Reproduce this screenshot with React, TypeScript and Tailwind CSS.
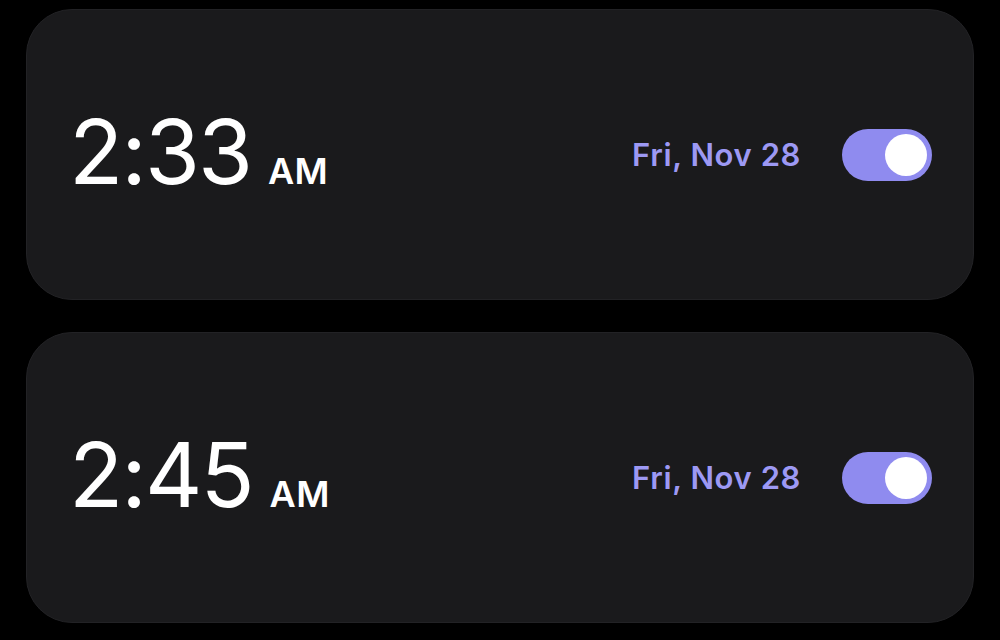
import React from "react";

function Toggle() {
  return (
    <div className="flex h-[52px] w-[90px] items-center justify-end rounded-full bg-[#8f8bef] px-[5px]">
      <div className="h-[42px] w-[42px] rounded-full bg-white" />
    </div>
  );
}

function AlarmCard({ time, period, date }: { time: string; period: string; date: string }) {
  return (
    <div className="flex h-[291px] items-center justify-between rounded-[46px] border border-[#222225] bg-[#1a1a1c] pl-[42px] pr-[41px]">
      <div className="mb-[6px] flex items-baseline gap-[17px] text-white">
        <span className="text-[89px] font-normal leading-none tracking-[-2px]">{time}</span>
        <span className="text-[36px] font-semibold leading-none tracking-[0.5px]">{period}</span>
      </div>
      <div className="flex items-center gap-[41px]">
        <span className="text-[31px] font-semibold leading-none tracking-[0.6px] text-[#9d99f4]">{date}</span>
        <Toggle />
      </div>
    </div>
  );
}

export default function App() {
  return (
    <div
      className="flex h-[640px] w-[1000px] flex-col gap-[32px] bg-black px-[26px] pt-[9px]"
      style={{ fontFamily: "Inter, 'Noto Sans', sans-serif" }}
    >
      <AlarmCard time="2:33" period="AM" date="Fri, Nov 28" />
      <AlarmCard time="2:45" period="AM" date="Fri, Nov 28" />
    </div>
  );
}
